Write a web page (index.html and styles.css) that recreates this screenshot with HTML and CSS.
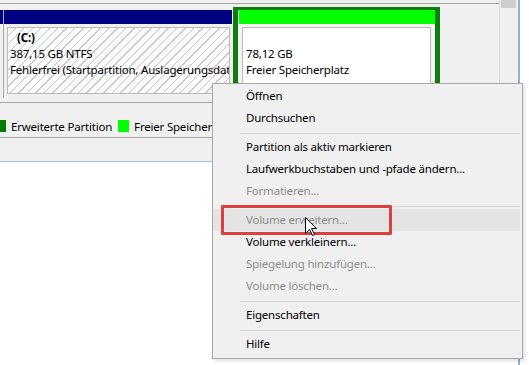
FILE: index.html
```html
<!DOCTYPE html>
<html lang="de">
<head>
    <meta charset="UTF-8">
    <title>Datenträgerverwaltung</title>
    <link rel="stylesheet" href="styles.css">
</head>
<body>
    <div class="window">
        <!-- Disk strip -->
        <div class="disk-pane">
            <div class="disk-view">
                <div class="disk-strip">
                    <div class="part part-stub">
                        <div class="bar bar-primary"></div>
                    </div>
                    <div class="part part-c">
                        <div class="bar bar-primary"></div>
                        <div class="part-body">
                            <div class="part-box hatched">
                                <div class="drive">(C:)</div>
                                <div>387,15 GB NTFS</div>
                                <div>Fehlerfrei (Startpartition, Auslagerungsdatei, Absturzabbild, Primäre Partition)</div>
                            </div>
                        </div>
                    </div>
                    <div class="part part-free">
                        <div class="bar bar-free"></div>
                        <div class="part-body">
                            <div class="part-box free-box">
                                <div>78,12 GB</div>
                                <div>Freier Speicherplatz</div>
                            </div>
                        </div>
                    </div>
                </div>
            </div>
            <div class="scrollbar"><div class="thumb"></div></div>
        </div>

        <!-- Legend -->
        <div class="legend">
            <span class="swatch swatch-extended"></span>
            <span class="legend-text">Erweiterte Partition</span>
            <span class="swatch swatch-free"></span>
            <span class="legend-text">Freier Speicherplatz</span>
            <span class="swatch swatch-logical"></span>
            <span class="legend-text">Logisches Laufwerk</span>
        </div>
        <div class="lower-bar"></div>
        <div class="list"></div>
    </div>
    <div class="edge"></div>

    <!-- Context menu -->
    <div class="menu">
        <div class="item">Öffnen</div>
        <div class="item">Durchsuchen</div>
        <div class="sep"></div>
        <div class="item">Partition als aktiv markieren</div>
        <div class="item">Laufwerkbuchstaben und -pfade ändern...</div>
        <div class="item disabled">Formatieren...</div>
        <div class="sep"></div>
        <div class="item disabled hover">Volume erweitern...</div>
        <div class="item">Volume verkleinern...</div>
        <div class="item disabled">Spiegelung hinzufügen...</div>
        <div class="item disabled">Volume löschen...</div>
        <div class="sep"></div>
        <div class="item">Eigenschaften</div>
        <div class="sep"></div>
        <div class="item">Hilfe</div>
    </div>

    <div class="mark"></div>

    <svg class="cursor" width="13" height="20" viewBox="0 0 13 20">
        <path d="M0.5 0.5 L0.5 16.5 L4.5 12.5 L7.5 18.5 L9.5 17.5 L6.5 11.5 L11.5 11.5 Z" fill="#fff" stroke="#000" stroke-width="1" stroke-linejoin="miter"/>
    </svg>
</body>
</html>
```

FILE: styles.css
```css
body {
    margin: 0;
    width: 529px;
    height: 365px;
    overflow: hidden;
    display: flex;
    background: #fff;
    font-family: "Noto Sans", "Open Sans", sans-serif;
    font-size: 11.5px;
    letter-spacing: -0.2px;
    color: #000;
}
.window {
    width: 518px;
    display: flex;
    flex-direction: column;
    background: #f0f0f0;
    border-right: 2px solid #8fb0da;
}
.edge {
    flex: 1;
    background: #fff;
}

/* disk strip */
.disk-pane {
    display: flex;
    height: 102px;
}
.disk-view {
    flex: 1;
    padding-top: 3px;
    border-right: 1px solid #dadada;
    overflow: hidden;
}
.disk-strip {
    display: flex;
    align-items: flex-start;
    height: 98px;
    border-top: 1px solid #a7a7a7;
}
.scrollbar {
    width: 18px;
    background: #f0f0f0;
}
.thumb {
    width: 15px;
    height: 8px;
    margin-left: 1px;
    background: #cdcdcd;
}
.part {
    display: flex;
    flex-direction: column;
    flex-shrink: 0;
}
.bar {
    height: 14px;
}
.bar-primary {
    background: #000080;
}
.bar-free {
    background: #00ff00;
}
.part-stub {
    width: 3px;
    height: 88px;
    margin-top: 6px;
    border-right: 1px solid #a7a7a7;
}
.part-c {
    width: 228px;
    margin-top: 6px;
}
.part-body {
    padding: 3px 2px 3px 3px;
}
.part-box {
    height: 65px;
    border: 1px solid #b9b9b9;
    line-height: 16px;
    white-space: nowrap;
    overflow: hidden;
}
.hatched {
    height: 63px;
    padding: 2px 0 0 2px;
    background: repeating-linear-gradient(135deg, #fdfdfd 0 5px, #c9c9c9 5px 6px);
}
.drive {
    font-weight: bold;
    padding-left: 7px;
}
.part-free {
    width: 196px;
    margin-top: 3px;
    margin-left: 1px;
    padding-left: 1px;
    background: #f4f4f4;
    border: 5px solid #0e7d0e;
    border-top-width: 3px;
    border-bottom-width: 4px;
}
.part-free .part-body {
    padding: 3px 4px 3px 3px;
}
.free-box {
    height: 47px;
    padding: 18px 0 0 3px;
    background: #fff;
}

/* legend */
.legend {
    display: flex;
    align-items: center;
    height: 16px;
    padding: 15px 0 3px;
    border-top: 1px solid #a7a7a7;
    border-bottom: 1px solid #a7a7a7;
    white-space: nowrap;
    overflow: hidden;
}
.swatch {
    flex-shrink: 0;
    width: 11px;
    height: 12px;
    margin-right: 5px;
}
.swatch-extended {
    margin-left: -5px;
    background: #007c00;
}
.swatch-free {
    background: #00ff00;
}
.swatch-logical {
    background: #0000ff;
}
.legend-text {
    margin-right: 6px;
}
.lower-bar {
    height: 23px;
    border-bottom: 1px solid #a4c3e3;
}
.list {
    flex: 1;
    background: #fff;
}

/* context menu */
.menu {
    position: absolute;
    left: 212px;
    top: 83px;
    width: 311px;
    height: 276px;
    box-sizing: border-box;
    padding: 1px 0;
    background: #f0f0f0;
    border: 1px solid #a8a8a8;
    box-shadow: 2px 2px 3px rgba(0, 0, 0, 0.12);
}
.item {
    height: 22px;
    line-height: 22px;
    padding-left: 33px;
    white-space: nowrap;
}
.item.disabled {
    color: #8d8d8d;
}
.item.hover {
    margin-right: 2px;
    background: #e4e4e4;
}
.sep {
    height: 1px;
    margin: 4px 2px 2px 27px;
    background: #d7d7d7;
}

/* annotation */
.mark {
    position: absolute;
    left: 221px;
    top: 205px;
    width: 165px;
    height: 24px;
    border: 3px solid #d9423c;
    border-radius: 1px;
}
.cursor {
    position: absolute;
    left: 305px;
    top: 217px;
}
```
